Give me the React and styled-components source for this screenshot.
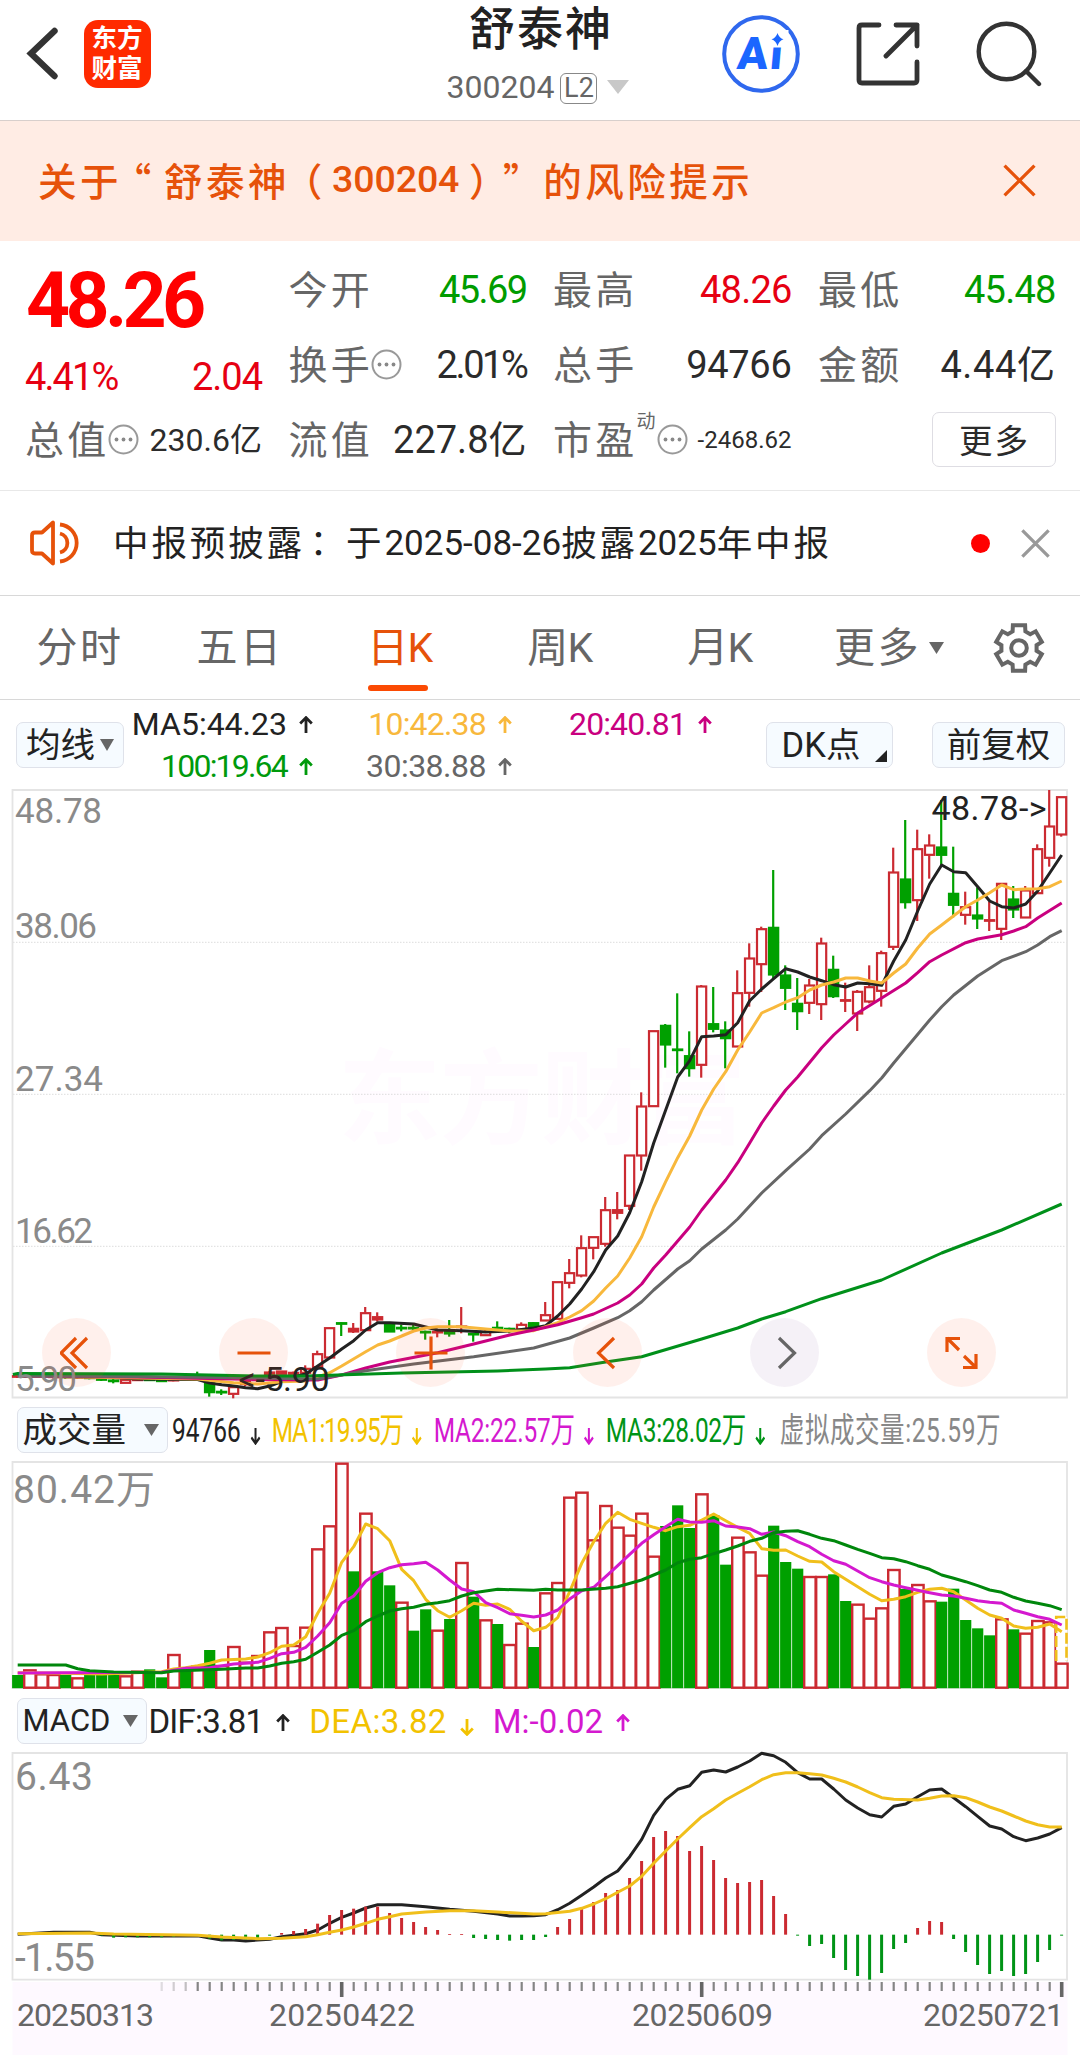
import React from 'react';
import styled, { createGlobalStyle } from 'styled-components';

const RED = '#cb2a31';
const GREEN = '#00a000';
const ORANGE = '#e6520a';
const YELLOW = '#f0bf1b';
const PINK = '#d419cf';

const STEP = 12;
const FIRST_X = 17.7;
const COUNT = 88;

const xAt = i => FIRST_X + i * STEP;

// [up, high, body top, body bottom, low], three units to a pixel, 0 is the top of the pane
const candles = [
    [1, 1754, 1757, 1761, 1764], [1, 1754, 1757, 1761, 1764], [0, 1754, 1757, 1761, 1764], [1, 1756, 1758, 1762, 1766],
    [0, 1756, 1758, 1762, 1766], [1, 1756, 1759, 1763, 1766], [0, 1758, 1761, 1765, 1768], [0, 1762, 1766, 1770, 1773],
    [0, 1765, 1770, 1775, 1780], [1, 1768, 1768, 1780, 1780], [1, 1765, 1767, 1771, 1772], [0, 1765, 1767, 1771, 1772],
    [0, 1766, 1770, 1773, 1776], [1, 1766, 1768, 1771, 1774], [0, 1762, 1765, 1768, 1770], [0, 1745, 1755, 1759, 1765],
    [0, 1777, 1777, 1808, 1820], [0, 1798, 1804, 1808, 1815], [1, 1790, 1790, 1813, 1825], [1, 1768, 1772, 1784, 1788],
    [1, 1756, 1760, 1772, 1776], [1, 1744, 1746, 1756, 1760], [1, 1743, 1743, 1753, 1753], [1, 1745, 1747, 1753, 1753],
    [1, 1726, 1735, 1750, 1752], [1, 1682, 1691, 1733, 1733], [1, 1613, 1613, 1704, 1704], [0, 1596, 1598, 1602, 1638],
    [1, 1599, 1615, 1626, 1629], [1, 1551, 1568, 1622, 1622], [1, 1567, 1580, 1590, 1595], [0, 1600, 1600, 1626, 1626],
    [0, 1604, 1612, 1616, 1624], [0, 1604, 1612, 1616, 1624], [0, 1622, 1624, 1628, 1649], [1, 1624, 1624, 1628, 1642],
    [0, 1590, 1620, 1632, 1640], [1, 1551, 1608, 1612, 1630], [0, 1630, 1630, 1634, 1655], [1, 1617, 1624, 1637, 1637],
    [0, 1594, 1612, 1620, 1625], [0, 1613, 1615, 1619, 1630], [1, 1597, 1603, 1620, 1620], [0, 1596, 1598, 1612, 1614],
    [1, 1536, 1574, 1593, 1593], [1, 1475, 1475, 1588, 1588], [1, 1407, 1448, 1480, 1495], [1, 1336, 1373, 1458, 1462],
    [1, 1340, 1340, 1375, 1408], [1, 1221, 1259, 1363, 1370], [1, 1206, 1259, 1270, 1288], [1, 1095, 1095, 1249, 1260],
    [1, 907, 948, 1098, 1142], [1, 722, 722, 950, 950], [0, 702, 706, 765, 833], [0, 610, 777, 781, 850],
    [0, 724, 797, 836, 860], [1, 585, 588, 826, 863], [0, 591, 701, 718, 727], [0, 694, 720, 746, 835],
    [1, 541, 608, 771, 771], [1, 460, 504, 610, 650], [1, 410, 416, 524, 606], [0, 240, 412, 555, 565],
    [0, 526, 555, 595, 660], [0, 564, 640, 665, 720], [1, 567, 585, 640, 672], [1, 443, 459, 644, 690],
    [0, 497, 538, 620, 624], [1, 578, 629, 633, 666], [1, 600, 604, 672, 723], [1, 526, 590, 636, 640],
    [1, 482, 488, 604, 650], [1, 173, 246, 472, 480], [0, 90, 267, 338, 356], [1, 119, 176, 332, 393],
    [1, 133, 165, 196, 266], [0, 30, 171, 196, 225], [0, 170, 310, 346, 382], [1, 305, 350, 376, 404],
    [0, 292, 375, 387, 417], [1, 335, 389, 393, 423], [1, 280, 280, 418, 450], [0, 288, 327, 360, 384],
    [1, 288, 300, 384, 384], [1, 163, 176, 311, 311], [1, 0, 108, 205, 230], [1, 20, 20, 135, 140],
];

// moving averages as [bar, y] pairs
const ma5 = [[0, 586], [8, 587.5], [10, 589], [15, 589.5], [16, 593], [17, 594.7], [18, 596], [19, 597.7], [20, 598.7], [21, 596], [22, 591.7], [23, 587], [24, 584], [25, 576], [26, 568], [27, 559], [28, 550.7], [29, 540], [30, 532.7], [31, 532.7], [33, 534], [34, 537], [35, 540], [37, 540.7], [39, 542], [41, 541], [43, 538], [44, 535.7], [45, 526], [46, 514], [47, 499], [48, 481.7], [49, 460], [50, 446], [51, 422.7], [52, 391.7], [53, 353], [54, 320], [55, 287], [56, 270.7], [57, 246.7], [58, 246], [59, 244.7], [60, 232.7], [61, 210.7], [62, 199], [63, 188.7], [64, 178.7], [65, 182], [66, 187], [67, 190.7], [68, 194.7], [69, 197], [70, 193], [71, 193.7], [72, 195.3], [73, 171], [74, 150], [75, 121], [76, 94], [77, 75], [78, 81.7], [79, 82.7], [80, 96.7], [81, 111], [82, 116.7], [83, 118], [84, 114], [85, 101], [86, 83], [87, 65]];
const ma10 = [[0, 586], [10, 588], [15, 589], [18, 592.7], [20, 594], [22, 591.7], [24, 591], [25, 587], [26, 582.7], [27, 576], [29, 561.7], [30, 555], [31, 551], [33, 541], [34, 538], [35, 536.7], [37, 536.7], [39, 539], [41, 541], [43, 540.7], [44, 536.7], [45, 532.7], [46, 527], [47, 520.7], [48, 511], [49, 498], [50, 486], [51, 468], [52, 446.7], [53, 417], [54, 391.7], [55, 367.7], [56, 346], [57, 320], [58, 299], [59, 281.7], [60, 260], [61, 242], [62, 223], [63, 217.7], [64, 212], [65, 207.7], [66, 200], [67, 195], [68, 192], [69, 188], [70, 188], [71, 191], [72, 193], [73, 183], [74, 174], [75, 158], [76, 144], [77, 135], [78, 125.7], [79, 116.7], [80, 110], [81, 102.7], [82, 95], [83, 99.7], [84, 99], [85, 98.7], [86, 96.7], [87, 91]];
const ma20 = [[0, 586], [10, 587], [20, 589.5], [25, 590], [27, 585], [29, 578], [31, 572], [35, 562.7], [38, 554], [41, 545], [43, 540], [45, 534.7], [47, 527.7], [48, 524], [50, 513], [51, 505], [52, 494], [53, 478], [54, 465], [56, 437], [57, 420], [59, 390], [60, 372.7], [61, 353], [62, 333], [63, 316], [64, 300], [65, 287], [67, 257.7], [68, 245], [69, 234], [70, 223], [72, 208], [74, 193], [75, 182.7], [76, 171.7], [77, 165], [79, 152.7], [80, 149], [82, 144.7], [83, 141], [84, 136.7], [85, 128], [87, 113]];
const ma30 = [[0, 586], [10, 586.5], [20, 588], [25, 589], [29, 580.7], [33, 574], [38, 566.7], [43, 558], [46, 548], [48, 538], [50, 527.7], [51, 520.7], [52, 511.7], [53, 500], [55, 479], [56, 470.7], [57, 459], [59, 440], [60, 429], [62, 403], [64, 380.7], [66, 359], [67, 345.7], [69, 324], [71, 300.7], [72, 288], [73, 273], [76, 230], [77, 216.7], [78, 205], [80, 186], [82, 170.7], [84, 161.7], [85, 155], [86, 146.7], [87, 140.7]];
const ma100 = [[-0.4, 584.5], [0, 583.5], [12, 584], [20, 586], [24, 586], [32, 583], [40, 581], [44, 579], [46, 577.7], [49, 572], [52, 566.7], [57, 549], [60, 538], [62, 529], [64, 521.7], [67, 508.7], [72, 490], [77, 463], [82, 440], [87, 414]];

// r = up day, g = down day; the number is the top of the bar
const volumes = 'g825 r808 r820 r822 g825 r832 g825 g825 g825 r826 r812 g808 g832 r762 g812 r797 g750 r795 r738 r785 r765 r694 r681 r735 r680 r445 r376 r188 g514 r338 g514 g556 r605 g692 g628 r689 g657 r486 g590 r658 g672 r732 r668 g741 r577 r546 r290 r275 r418 r315 r380 r404 r338 r467 g378 g316 g384 r280 g345 g494 r410 r454 r524 g377 g486 g506 r528 r528 g523 g603 r611 r653 r622 r507 g567 r552 r601 g605 g566 g660 g685 g706 r655 g688 r698 r660 r664 r788'
    .split(' ')
    .map(v => ({ up: v[0] === 'r', top: (Number(v.slice(1)) - 186) / 3 }));

const volY = pairs => pairs.map(([i, v]) => [i, (v - 186) / 3]);
const volMa1 = volY([[0, 818], [4, 820], [7, 822], [12, 815], [13, 807], [14, 803], [15, 797], [16, 790], [17, 780], [19, 777], [20, 771], [21, 758], [22, 739], [23, 735], [24, 710], [25, 640], [26, 580], [27, 487], [28, 440], [29, 372], [30, 386], [31, 422], [32, 508], [33, 542], [34, 598], [35, 632], [36, 652], [37, 632], [38, 610], [39, 616], [40, 612], [41, 628], [42, 664], [43, 692], [44, 682], [45, 653], [46, 575], [47, 490], [48, 425], [49, 370], [50, 337], [51, 358], [52, 370], [53, 382], [54, 392], [55, 380], [56, 376], [57, 360], [58, 342], [59, 362], [60, 382], [61, 400], [62, 446], [63, 451], [64, 450], [65, 468], [66, 484], [67, 486], [68, 515], [69, 538], [70, 560], [71, 583], [72, 602], [73, 598], [74, 590], [75, 577], [76, 568], [77, 565], [78, 575], [79, 600], [80, 625], [81, 645], [82, 655], [83, 678], [84, 685], [85, 682], [86, 672], [87, 695]]);
const volMa2 = volY([[0, 819], [12, 817], [14, 805], [16, 803], [18, 792], [20, 787], [21, 775], [22, 761], [23, 757], [24, 742], [25, 708], [26, 668], [27, 610], [28, 588], [29, 544], [30, 518], [31, 503], [32, 494], [33, 491], [34, 487], [35, 510], [36, 540], [37, 567], [38, 575], [39, 608], [40, 623], [41, 641], [42, 646], [43, 651], [44, 645], [45, 630], [46, 597], [47, 572], [48, 562], [49, 530], [50, 497], [51, 463], [52, 430], [53, 404], [54, 380], [55, 358], [56, 366], [57, 367], [58, 362], [59, 378], [60, 381], [61, 386], [62, 403], [63, 396], [64, 407], [65, 425], [66, 440], [67, 463], [68, 482], [69, 493], [70, 513], [71, 533], [72, 545], [73, 555], [74, 563], [75, 571], [76, 578], [77, 585], [78, 588], [79, 595], [80, 602], [81, 607], [82, 610], [83, 630], [84, 640], [85, 650], [86, 658], [87, 675]]);
const volMa3 = volY([[0, 795], [4, 795], [5, 806], [6, 812], [8, 816], [12, 818], [13, 813], [17, 808], [19, 804], [20, 804], [21, 798], [22, 790], [23, 785], [24, 778], [25, 757], [26, 735], [27, 706], [28, 692], [29, 665], [30, 648], [31, 633], [32, 626], [33, 622], [34, 613], [35, 608], [36, 602], [37, 588], [38, 578], [39, 573], [40, 568], [43, 571], [44, 568], [45, 570], [47, 570], [49, 565], [50, 560], [52, 540], [54, 510], [55, 488], [56, 478], [57, 473], [58, 461], [59, 450], [60, 438], [61, 424], [62, 415], [63, 398], [64, 394], [65, 392], [66, 403], [67, 415], [68, 422], [69, 435], [70, 448], [71, 460], [72, 473], [73, 476], [74, 485], [75, 497], [76, 508], [77, 525], [78, 535], [79, 545], [80, 557], [81, 570], [82, 577], [83, 592], [84, 603], [85, 610], [86, 617], [87, 629]]);

const ZERO = 584;
const macdY = v => v / 3 - 13;
// starts at bar 7
const macdBars = [586, 593, 592, 592, 592, 592, 590, 588, 586, 596, 601, 600, 599, 595, 587, 579, 573, 567, 551, 525, 510, 506, 500, 500, 519, 534, 546, 561, 570, 582, 582, 594, 597, 600, 602, 600, 600, 591, 561, 537, 506, 486, 459, 450, 414, 363, 291, 273, 288, 333, 318, 360, 414, 429, 426, 420, 468, 522, 587, 618, 612, 654, 690, 708, 719, 699, 627, 609, 564, 543, 546, 597, 636, 675, 702, 693, 708, 702, 666, 630, 587];
const dif = [[0, 583], [3, 577], [6, 577], [7, 584], [10, 588], [14, 588], [15, 587], [16, 594], [17, 600], [18, 600], [19, 603], [20, 600], [21, 598], [22, 590], [23, 586], [24, 581], [25, 570], [26, 550], [27, 532], [28, 519], [29, 504], [30, 494], [32, 494], [34, 500], [36, 508], [38, 514], [40, 522], [41, 528], [42, 528], [43, 527], [44, 524], [45, 509], [46, 490], [47, 466], [48, 441], [49, 414], [50, 393], [51, 350], [52, 298], [53, 226], [54, 178], [55, 148], [56, 137], [57, 97], [58, 90], [59, 96], [60, 81], [61, 63], [62, 40], [63, 47], [64, 67], [65, 98], [66, 117], [67, 117], [68, 147], [69, 180], [70, 204], [71, 224], [72, 231], [73, 199], [74, 192], [75, 170], [76, 150], [77, 147], [78, 173], [79, 200], [80, 229], [81, 258], [82, 267], [83, 290], [84, 302], [85, 294], [86, 282], [87, 263]].map(([i, v]) => [i, macdY(v)]);
const dea = [[0, 581], [6, 579], [8, 582], [15, 586], [17, 591], [20, 596], [22, 595], [24, 590], [25, 584], [26, 577], [27, 570], [28, 561], [29, 550], [30, 538], [31, 530], [32, 522], [34, 516], [36, 512], [38, 512], [40, 516], [43, 522], [44, 521], [46, 514], [47, 505], [48, 492], [49, 476], [50, 457], [51, 438], [52, 409], [53, 370], [54, 333], [55, 297], [56, 263], [57, 230], [58, 206], [59, 180], [60, 160], [61, 140], [62, 119], [63, 104], [64, 98], [65, 98], [66, 101], [67, 105], [68, 115], [69, 126], [70, 141], [71, 158], [72, 173], [73, 178], [75, 180], [76, 175], [77, 168], [78, 167], [79, 173], [80, 186], [81, 201], [82, 213], [83, 228], [84, 243], [85, 254], [86, 261], [87, 261]].map(([i, v]) => [i, macdY(v)]);

const toPoints = pairs => pairs.map(([i, y]) => `${xAt(i).toFixed(1)},${y.toFixed(1)}`).join(' ');

const Curve = ({ data, color, width = 3 }) => (
    <polyline points={toPoints(data)} fill="none" stroke={color} strokeWidth={width} strokeLinejoin="round" />
);

const Frame = ({ height }) => (
    <path d={`M12.5 0V${height}H1067V0Z`} fill="none" stroke="#e4e4e4" strokeWidth="1.8" />
);

const PriceChart = () => (
    <Pane width="1080" height="611" viewBox="0 -1 1080 611">
        <Watermark x="338" y="346" textLength="408">东方财富</Watermark>
        {[152.3, 304.3, 456.3].map(y => (
            <line key={y} x1="13" x2="1067" y1={y} y2={y} stroke="#dcdcdc" strokeWidth="1" strokeDasharray="1.5 1.5" />
        ))}
        <Frame height={607.5} />
        {candles.map(([up, high, top, bottom, low], i) => {
            const x = xAt(i) - 0.5;
            const flat = bottom - top < 12;
            return (
                <g key={i} stroke={up ? RED : GREEN} strokeWidth="2.2">
                    <line x1={x} x2={x} y1={high / 3} y2={top / 3} />
                    <line x1={x} x2={x} y1={bottom / 3} y2={low / 3} />
                    <rect
                        x={x - 4.2}
                        y={top / 3 + 0.5}
                        width="9.2"
                        height={Math.max((bottom - top) / 3 - 1, 0.6)}
                        fill={!up ? GREEN : flat ? RED : '#fff'}
                    />
                </g>
            );
        })}
        <Curve data={ma5} color="#222" />
        <Curve data={ma10} color="#f8b83c" />
        <Curve data={ma20} color="#c9007f" />
        <Curve data={ma30} color="#666" />
        <Curve data={ma100} color="#00901a" />
        <AxisText x="15" y="32.5" textLength="87">48.78</AxisText>
        <AxisText x="15" y="147.5" textLength="82">38.06</AxisText>
        <AxisText x="15" y="300.5" textLength="88">27.34</AxisText>
        <AxisText x="15" y="453" textLength="78">16.62</AxisText>
        <AxisText x="15" y="600.5" textLength="62">5.90</AxisText>
        <MarkText x="931.5" y="30" textLength="115">48.78-&gt;</MarkText>
        <MarkText x="238.5" y="600.5" textLength="91">&lt;-5.90</MarkText>
    </Pane>
);

const VolumeChart = () => (
    <Pane width="1080" height="231" viewBox="0 -2 1080 231">
        <Frame height={226} />
        {volumes.map(({ up, top }, i) => up ? (
            <rect key={i} x={xAt(i) - 5.5} y={top + 1} width="11.4" height={224.7 - top} fill="#fff" stroke={RED} strokeWidth="2.4" />
        ) : (
            <rect key={i} x={xAt(i) - 5.6} y={top} width="11.2" height={226.2 - top} fill={GREEN} />
        ))}
        <path d="M1056.2 199V155H1067V199" fill="#fff" stroke="none" />
        <path d="M1056.2 199V155H1066.5V199" fill="none" stroke={YELLOW} strokeWidth="2.6" strokeDasharray="11 3" />
        <Curve data={volMa1} color={YELLOW} />
        <Curve data={volMa2} color={PINK} />
        <Curve data={volMa3} color="#00870c" />
        <AxisText x="13" y="40.5" textLength="142" $size={39}>80.42万</AxisText>
    </Pane>
);

const MacdChart = () => (
    <Pane width="1080" height="231" viewBox="0 -2 1080 231">
        <Frame height={226.6} />
        <Curve data={dif} color="#222" />
        {macdBars.map((v, n) => (
            <rect
                key={n}
                x={xAt(n + 7) - 1.6}
                y={macdY(Math.min(v, ZERO))}
                width="3"
                height={Math.max(Math.abs(v - ZERO) / 3, 0.8)}
                fill={v < ZERO ? RED : '#009416'}
            />
        ))}
        <Curve data={dea} color={YELLOW} />
        <AxisText x="15" y="36.7" textLength="78" $size={39}>6.43</AxisText>
        <AxisText x="15" y="217.5" textLength="80" $size={39}>-1.55</AxisText>
    </Pane>
);

const DateAxis = () => (
    <Pane width="1080" height="73" viewBox="0 0 1080 73">
        <rect x="12.5" y="0" width="1055" height="73" fill="#fef9ff" />
        {Array.from({ length: COUNT - 12 }, (_, n) => n + 12).map(i => {
            const major = i === 27 || i === 57 || i === 87;
            return (
                <line
                    key={i}
                    x1={xAt(i)}
                    x2={xAt(i)}
                    y1="0"
                    y2={major ? 15 : 9}
                    stroke={major ? '#666' : '#858585'}
                    strokeWidth={major ? 3.6 : 2.2}
                    opacity={i < 15 ? 0.25 + (i - 12) * 0.12 : 1}
                />
            );
        })}
        <DateText x="17" y="44" textLength="137">20250313</DateText>
        <DateText x="269" y="44" textLength="146">20250422</DateText>
        <DateText x="632" y="44" textLength="141">20250609</DateText>
        <DateText x="923" y="44" textLength="141">20250721</DateText>
    </Pane>
);

const Arrow = ({ down, width = 14 }) => (
    <ArrowSvg width={width} height="18" viewBox="0 0 14 18" preserveAspectRatio="none" $down={down}>
        <path d="M7 17V2M1.2 7.4L7 1.6L12.8 7.4" fill="none" stroke="currentColor" strokeWidth="2.8" transform={down ? 'rotate(180 7 9)' : undefined} />
    </ArrowSvg>
);

const Triangle = ({ width = 15, height = 12, color = '#666' }) => (
    <svg width={width} height={height} viewBox="0 0 10 10" preserveAspectRatio="none">
        <path d="M0 0H10L5 10Z" fill={color} />
    </svg>
);

const MoreDots = () => (
    <svg width="31" height="31" viewBox="0 0 31 31">
        <circle cx="15.5" cy="15.5" r="14" fill="none" stroke="#999" strokeWidth="2" />
        <circle cx="8.5" cy="15.5" r="1.9" fill="#888" />
        <circle cx="15.5" cy="15.5" r="1.9" fill="#888" />
        <circle cx="22.5" cy="15.5" r="1.9" fill="#888" />
    </svg>
);

const Cross = ({ size, color, width }) => (
    <svg width={size} height={size} viewBox="0 0 32 32">
        <path d="M1.5 1.5L30.5 30.5M30.5 1.5L1.5 30.5" stroke={color} strokeWidth={width} />
    </svg>
);

const gearPoints = [0, 1, 2, 3, 4, 5].flatMap(k => {
    const a = k * 60 - 90;
    return [[-21, 17.8], [-15, 23.6], [15, 23.6], [21, 17.8]].map(([d, r]) => {
        const t = (a + d) * Math.PI / 180;
        return `${(26 + r * Math.cos(t)).toFixed(2)},${(26 + r * Math.sin(t)).toFixed(2)}`;
    });
}).join(' ');

const Gear = () => (
    <svg width="52" height="52" viewBox="0 0 52 52" fill="none" stroke="#666" strokeWidth="4">
        <polygon points={gearPoints} />
        <circle cx="26" cy="26" r="7.8" />
    </svg>
);

const App = () => (
    <Page>
        <GlobalStyle />
        <Header>
            <HeaderLeft>
                <svg width="34" height="56" viewBox="0 0 34 56">
                    <path d="M29.5 5L6 27.5L29.5 50" fill="none" stroke="#333" strokeWidth="6.4" strokeLinecap="round" strokeLinejoin="miter" />
                </svg>
                <Logo>东方财富</Logo>
            </HeaderLeft>
            <Title>
                <h1>舒泰神</h1>
                <Code>
                    300204<Level>L2</Level><Triangle width={22} height={14} color="#c8c8c8" />
                </Code>
            </Title>
            <HeaderRight>
                <svg width="78" height="78" viewBox="0 0 78 78">
                    <circle cx="39" cy="39" r="36.8" fill="none" stroke="#2f68ee" strokeWidth="4" />
                    <AiText x="19" y="54" transform="skewX(-5)">Ai</AiText>
                    <rect x="45.5" y="15" width="21" height="17.5" fill="#fff" />
                    <path d="M55.5 18Q57 23 61.5 24.3Q57 26 55.5 31Q54 26 49.5 24.3Q54 23 55.5 18Z" fill="#1b66ff" />
                </svg>
                <svg width="64" height="64" viewBox="0 0 64 64" fill="none" stroke="#333" strokeWidth="4.8" strokeLinecap="round" strokeLinejoin="round">
                    <path d="M23 3H6Q3 3 3 6V58Q3 61 6 61H58Q61 61 61 58V40" />
                    <path d="M40 3H61V24M61 3L30 34" />
                </svg>
                <svg width="66" height="66" viewBox="0 0 66 66" fill="none" stroke="#333" strokeWidth="4.4" strokeLinecap="round">
                    <circle cx="30.5" cy="30.5" r="27.8" />
                    <path d="M50 50L63 63" />
                </svg>
            </HeaderRight>
        </Header>

        <Banner>
            <BannerText>
                关于<Wide $shift={-11}>“</Wide>舒泰神<Wide $shift={-8}>（</Wide><b>300204</b><Wide $shift={8}>）</Wide><Wide>”</Wide>的风险提示
            </BannerText>
            <Cross size={33} color={ORANGE} width={3.2} />
        </Banner>

        <Quote>
            <PriceBlock>
                <Price>48.26</Price>
                <Change><Num $color="#e60012" $gap={-1.9}>4.41%</Num><Num $color="#e60012" $gap={-1}>2.04</Num></Change>
            </PriceBlock>
            <Cell><Label>今开</Label><Num $color="#009c00" $gap={-1.6}>45.69</Num></Cell>
            <Cell><Label>最高</Label><Num $color="#e60012" $gap={-0.8}>48.26</Num></Cell>
            <Cell><Label>最低</Label><Num $color="#009c00" $gap={-0.8}>45.48</Num></Cell>
            <Cell><Label>换手</Label><MoreDots /><Num $gap={-2.4}>2.01%</Num></Cell>
            <Cell><Label>总手</Label><Num $gap={-0.3}>94766</Num></Cell>
            <Cell><Label>金额</Label><Num $gap={0.6}>4.44亿</Num></Cell>
            <Cell><Label>总值</Label><MoreDots /><Num $size={32}>230.6亿</Num></Cell>
            <Cell><Label>流值</Label><Num>227.8亿</Num></Cell>
            <Cell><Label>市盈</Label><Sup>动</Sup><MoreDots /><Num $size={24}>-2468.62</Num></Cell>
            <Cell $end><MoreButton>更多</MoreButton></Cell>
        </Quote>

        <Notice>
            <svg width="52" height="46" viewBox="0 0 52 46" fill="none" stroke={ORANGE} strokeWidth="3.8">
                <path d="M24 2.5V43.5L13 33.5H6Q3 33.5 3 30.5V15.5Q3 12.5 6 12.5H13L24 2.5Z" strokeLinejoin="round" />
                <path d="M31 13.5A9.8 9.8 0 0 1 31 32.5M31 4.5A18.6 18.6 0 0 1 31 41.5" />
            </svg>
            <NoticeText>
                <i>中报预披露</i><Colon>：</Colon><i>于</i>2025-08-26<i>披露</i>2025<i>年中报</i>
            </NoticeText>
            <Dot />
            <Cross size={29} color="#999" width={3.6} />
        </Notice>

        <Tabs>
            <Tab>分时</Tab>
            <Tab>五日</Tab>
            <Tab $active $tight>日K</Tab>
            <Tab $tight>周K</Tab>
            <Tab $tight>月K</Tab>
            <Tab $wide>更多<Triangle width={15} height={12} /></Tab>
            <Gear />
        </Tabs>

        <MaBar>
            <Pill $width={108}>均线<Triangle width={14} height={12} /></Pill>
            <MaGrid>
                <Ma $color="#222">MA5:44.23<Arrow /></Ma>
                <Ma $color="#f8b83c" $gap={-0.8}>10:42.38<Arrow /></Ma>
                <Ma $color="#c9007f" $gap={-0.9}>20:40.81<Arrow /></Ma>
                <Ma $color="#009a0c" $gap={-1.8}>100:19.64<Arrow /></Ma>
                <Ma $color="#666" $gap={-0.5}>30:38.88<Arrow /></Ma>
            </MaGrid>
            <Pill $width={127} $corner>DK点</Pill>
            <Pill $width={133}>前复权</Pill>
        </MaBar>

        <ChartBox>
            <PriceChart />
            <Tools>
                <Tool><svg width="34" height="34" viewBox="0 0 34 34"><path d="M16 2L1 17L16 32M27 2L12 17L27 32" /></svg></Tool>
                <Tool><svg width="34" height="34" viewBox="0 0 34 34"><path d="M0.5 17H33.5" /></svg></Tool>
                <Tool><svg width="34" height="34" viewBox="0 0 34 34"><path d="M0.5 17H33.5M17 0.5V33.5" /></svg></Tool>
                <Tool><svg width="34" height="34" viewBox="0 0 34 34"><path d="M23 2L7.5 17L23 32" /></svg></Tool>
                <Tool $muted><svg width="34" height="34" viewBox="0 0 34 34"><path d="M11 2L26.5 17L11 32" /></svg></Tool>
                <Tool><svg width="34" height="34" viewBox="0 0 34 34"><path d="M15 2.5H2V16M2 2L14 14M18 31.5H31V18M31 31.5L19 20" /></svg></Tool>
            </Tools>
        </ChartBox>

        <IndicatorBar>
            <Pill $width={151} $spread>成交量<Triangle width={15} height={12} /></Pill>
            <Squeezed>
                <Value $color="#222">94766<Arrow down /></Value>
                <Value $color="#f2c200" $gap={-1.7}>MA1:19.95万<Arrow down /></Value>
                <Value $color={PINK} $gap={-0.3}>MA2:22.57万<Arrow down /></Value>
                <Value $color="#009416" $gap={-0.4}>MA3:28.02万<Arrow down /></Value>
                <Value $color="#888" $gap={0.8}>虚拟成交量:25.59万</Value>
            </Squeezed>
        </IndicatorBar>
        <VolumeChart />

        <IndicatorBar>
            <Pill $width={130} $spread $size={31}>MACD<Triangle width={15} height={12} /></Pill>
            <MacdValues>
                <Value $color="#222" $gap={-0.8}>DIF:3.81<Arrow /></Value>
                <Value $color="#f2c200" $gap={0.4}>DEA:3.82<Arrow down /></Value>
                <Value $color={PINK}>M:-0.02<Arrow /></Value>
            </MacdValues>
        </IndicatorBar>
        <MacdChart />
        <DateAxis />
    </Page>
);

export default App;

const GlobalStyle = createGlobalStyle`
    body {
        margin: 0;
        background: #fff;
    }

    * {
        box-sizing: border-box;
    }

    svg {
        display: block;
        flex: none;
    }
`

const latin = `Roboto, "Noto Sans CJK SC", sans-serif`
const cjk = `"Noto Sans CJK SC", sans-serif`

const Page = styled.div`
    width: 1080px;
    height: 2055px;
    overflow: hidden;
    background: #fff;
    color: #222;
    font-family: ${latin};
    line-height: 1;
    white-space: nowrap;
`

const Header = styled.header`
    display: grid;
    grid-template-columns: 1fr 240px 1fr;
    height: 121px;
    border-bottom: 1px solid #d8cfcc;
`

const HeaderLeft = styled.div`
    display: flex;
    align-items: center;
    height: 107px;
    padding-left: 25px;
    gap: 24.5px;
`

const Logo = styled.div`
    width: 67px;
    height: 68px;
    padding: 3px 8px 0;
    border-radius: 14px;
    background: #ff2a00;
    color: #fff;
    font: 700 25.5px/30px ${latin};
    text-align: center;
    white-space: normal;
    word-break: break-all;
`

const Title = styled.div`
    display: flex;
    flex-direction: column;
    align-items: center;

    h1 {
        margin: 2px -2px 0 0;
        font: 500 46px/54px ${latin};
        letter-spacing: 2px;
    }
`

const Code = styled.div`
    display: flex;
    align-items: center;
    height: 32px;
    margin: 15px 4px 0 0;
    color: #666;
    font-size: 32px;
`

const Level = styled.span`
    display: flex;
    align-items: center;
    justify-content: center;
    width: 37px;
    height: 31px;
    margin: 2px 10px 0 6px;
    border: 1.5px solid #888;
    border-radius: 6px;
    font-size: 27px;
`

const HeaderRight = styled.div`
    display: flex;
    align-items: center;
    justify-content: flex-end;
    height: 107px;
    padding-right: 38px;
    gap: 56px;
`

const AiText = styled.text`
    font: 900 45px Roboto, sans-serif;
    letter-spacing: 2px;
    fill: #1b66ff;
`

const Banner = styled.div`
    display: flex;
    align-items: center;
    justify-content: space-between;
    height: 120px;
    padding: 0 44px 2px 38px;
    background: #ffece4;
    color: ${ORANGE};
`

const BannerText = styled.div`
    display: flex;
    align-items: center;
    height: 42px;
    margin-bottom: 2px;
    font: 500 38.5px/42px ${cjk};
    letter-spacing: 3.5px;

    b {
        font: 500 37.5px/42px ${latin};
        letter-spacing: -0.1px;
    }
`

const Wide = styled.span`
    display: flex;
    justify-content: center;
    width: 42px;
    margin-left: ${props => props.$shift || 0}px;
    margin-right: ${props => -(props.$shift || 0)}px;
    letter-spacing: 0;
`

const Quote = styled.section`
    display: grid;
    grid-template-columns: 236px 237px 237.5px 236.5px;
    grid-template-rows: repeat(3, 75px);
    column-gap: 27.5px;
    height: 250px;
    padding: 11px 0 0 26px;
    border-bottom: 1px solid #e8e8e8;
`

const PriceBlock = styled.div`
    grid-row: span 2;
    display: flex;
    flex-direction: column;
`

const Price = styled.div`
    height: 76px;
    margin-top: 11px;
    color: #f00;
    font-size: 77px;
    font-weight: 700;
    line-height: 76px;
    letter-spacing: -4.7px;
`

const Change = styled.div`
    display: flex;
    justify-content: space-between;
    margin: 19px 0 0 -1px;
`

const Cell = styled.div`
    display: flex;
    align-items: center;
    justify-content: ${props => props.$end ? 'flex-end' : 'flex-start'};

    svg {
        margin-left: 1px;
    }
`

const Label = styled.span`
    margin: -5px -3px 0 -1px;
    color: #666;
    font: 400 39px/44px ${cjk};
    letter-spacing: 3.3px;
`

const Num = styled.span`
    margin-left: auto;
    color: ${props => props.$color || '#2b2b2b'};
    font-size: ${props => props.$size || 38}px;
    letter-spacing: ${props => props.$gap || 0}px;

    ${Change} & {
        margin-left: 0;
    }
`

const Sup = styled.sup`
    align-self: flex-start;
    margin: 7px 0 0 2px;
    color: #666;
    font: 400 19px/22px ${cjk};
`

const MoreButton = styled.button`
    width: 124px;
    height: 55px;
    padding: 0 0 2px 2px;
    border: 1.5px solid #dedde3;
    border-radius: 7px;
    background: #fff;
    color: #2b2b2b;
    font: 400 33.5px/48px ${cjk};
    letter-spacing: 2px;
`

const Notice = styled.div`
    display: flex;
    align-items: center;
    height: 105px;
    padding: 0 30px 0 29px;
    border-bottom: 1.5px solid #d8d8d8;
`

const NoticeText = styled.div`
    display: flex;
    align-items: center;
    flex: 1;
    margin-left: 32px;
    font-size: 35px;

    i {
        margin-top: -4px;
        font: 400 35.5px/42px ${cjk};
        letter-spacing: 2.9px;
    }
`

const Colon = styled.span`
    width: 41px;
    margin-top: -3px;
    font-family: "Noto Sans CJK TC", sans-serif;
    text-indent: -4px;
`

const Dot = styled.span`
    width: 19px;
    height: 19px;
    margin-right: 31px;
    border-radius: 50%;
    background: #f00;
`

const Tabs = styled.nav`
    display: flex;
    align-items: center;
    height: 104px;
    border-bottom: 1.5px solid #d8d8d8;
`

const Tab = styled.a`
    position: relative;
    display: flex;
    align-items: center;
    justify-content: ${props => props.$wide ? 'flex-start' : 'center'};
    gap: 8px;
    width: ${props => props.$wide ? 193 : 160}px;
    height: 100%;
    padding-left: ${props => props.$wide ? 34 : 0}px;
    color: ${props => props.$active ? ORANGE : '#666'};
    font: 400 41px/48px ${latin};
    letter-spacing: ${props => props.$tight ? -0.5 : 2.5}px;

    &::after {
        content: '';
        display: ${props => props.$active ? 'block' : 'none'};
        position: absolute;
        bottom: 8px;
        left: 48px;
        width: 60px;
        height: 6px;
        border-radius: 3px;
        background: #fb4a03;
    }
`

const Pill = styled.button`
    position: relative;
    display: flex;
    align-items: center;
    justify-content: ${props => props.$spread ? 'space-between' : 'center'};
    gap: 5px;
    flex: none;
    width: ${props => props.$width}px;
    height: 46px;
    padding: ${props => props.$corner ? '0 17px 0 0' : props.$spread ? '0 8px 0 5px' : '0'};
    border: 1.5px solid #dfe2ea;
    border-radius: 7px;
    background: #f6fbff;
    color: #222;
    font: 400 ${props => props.$size || 34.5}px/42px ${latin};

    &::after {
        content: '';
        display: ${props => props.$corner ? 'block' : 'none'};
        position: absolute;
        right: 5px;
        bottom: 5px;
        border-left: 12px solid transparent;
        border-bottom: 12px solid #222;
    }
`

const MaBar = styled.div`
    display: flex;
    align-items: center;
    height: 89px;
    padding: 0 15px 0 16px;

    button:last-child {
        margin-left: 39px;
    }
`

const MaGrid = styled.div`
    display: grid;
    grid-template-columns: 189px 199px 200px;
    grid-template-rows: 42px 42px;
    flex: 1;
`

const Ma = styled.div`
    display: flex;
    align-items: center;
    justify-content: flex-end;
    gap: 12px;
    color: ${props => props.$color};
    font-size: 32px;
    letter-spacing: ${props => props.$gap || 0}px;
`

const ArrowSvg = styled.svg`
    margin-top: ${props => props.$down ? 12 : 3}px;
`

const ChartBox = styled.div`
    position: relative;
    height: 611px;
`

const Pane = styled.svg`
    font-family: ${latin};
`

const Watermark = styled.text`
    font: 700 103px ${cjk};
    fill: #fffbff;
`

const AxisText = styled.text`
    font-size: ${props => props.$size || 35}px;
    fill: #8a8a8a;
`

const MarkText = styled.text`
    font-size: 34px;
    fill: #222;
`

const DateText = styled.text`
    font-size: 32px;
    fill: #666;
`

const Tools = styled.div`
    position: absolute;
    left: 42px;
    right: 84px;
    bottom: 13px;
    display: flex;
    justify-content: space-between;
`

const Tool = styled.button`
    display: flex;
    align-items: center;
    justify-content: center;
    width: 69px;
    height: 69px;
    padding: 0;
    border: 0;
    border-radius: 50%;
    background: ${props => props.$muted ? 'rgba(110, 60, 140, 0.07)' : 'rgba(255, 90, 40, 0.09)'};

    path {
        fill: none;
        stroke: ${props => props.$muted ? '#666' : ORANGE};
        stroke-width: 3.2px;
    }
`

const IndicatorBar = styled.div`
    display: flex;
    align-items: center;
    height: 60px;
    padding-left: 16.5px;
`

const Squeezed = styled.div`
    display: flex;
    align-items: center;
    gap: 16px;
    margin-left: 4px;
    font-size: 34px;
    transform: scaleX(0.72);
    transform-origin: left center;

    > :last-child {
        margin-left: 4px;
    }
`

const MacdValues = styled.div`
    display: flex;
    align-items: center;
    gap: 19px;
    margin-left: 2px;
    font-size: 33px;
`

const Value = styled.div`
    display: flex;
    align-items: center;
    gap: 13px;
    color: ${props => props.$color};
    letter-spacing: ${props => props.$gap || 0}px;
`
